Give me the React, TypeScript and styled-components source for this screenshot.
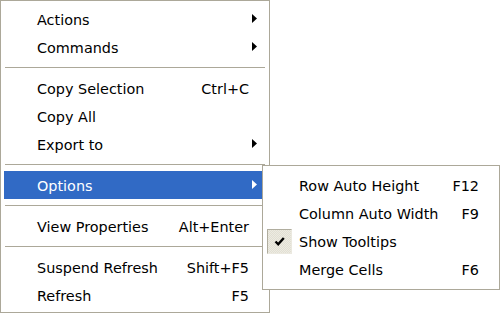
import React from "react";
import styled, { createGlobalStyle } from "styled-components";

const Global = createGlobalStyle`
  html, body { margin: 0; padding: 0; background: #ffffff; }
  body { font-family: "DejaVu Sans", "Liberation Sans", sans-serif; font-size: 14.4px; color: #000; }
`;

const Page = styled.div`
  width: 502px;
  height: 314px;
  overflow: hidden;
`;

const Menu = styled.div`
  box-sizing: border-box;
  width: 270px;
  height: 313px;
  border: 1px solid #aca899;
  background: #ffffff;
  padding: 4px 3px 3px 3px;
  display: flex;
  flex-direction: column;
`;

const SubMenu = styled.div`
  position: absolute;
  left: 258px;
  top: -6px;
  box-sizing: border-box;
  width: 238px;
  border: 1px solid #aca899;
  background: #ffffff;
  padding: 5px 3px 6px 3px;
  display: flex;
  flex-direction: column;
  z-index: 2;
`;

const Item = styled.div<{ $active?: boolean }>`
  position: relative;
  box-sizing: border-box;
  height: 28px;
  display: grid;
  grid-template-columns: 33px 1fr auto 17px;
  align-items: center;
  background: ${(p) => (p.$active ? "#316ac5" : "transparent")};
  color: ${(p) => (p.$active ? "#ffffff" : "#000000")};
  white-space: nowrap;
`;

const Label = styled.span`
  padding-top: 2px;
`;

const Shortcut = styled.span`
  padding-top: 2px;
  text-align: right;
`;

const ArrowCell = styled.span`
  display: flex;
  align-items: center;
  padding-left: 3px;
  margin-top: -2px;
`;

const IconCell = styled.span`
  display: flex;
  align-items: center;
  height: 100%;
`;

const CheckBox = styled.span`
  box-sizing: border-box;
  margin-left: 1px;
  width: 25px;
  height: 25px;
  border-top: 1px solid #b0ad9e;
  border-left: 1px solid #b0ad9e;
  border-right: 1px solid #ebe9e0;
  border-bottom: 1px solid #ebe9e0;
  background-color: #ecebe3;
  background-image:
    linear-gradient(45deg, #e2dfd2 25%, transparent 25%, transparent 75%, #e2dfd2 75%),
    linear-gradient(45deg, #e2dfd2 25%, transparent 25%, transparent 75%, #e2dfd2 75%);
  background-size: 2px 2px;
  background-position: 0 0, 1px 1px;
  display: flex;
  align-items: center;
  justify-content: center;
`;

const Separator = styled.div`
  height: 13px;
  flex: none;
  &::before {
    content: "";
    display: block;
    margin: 6px 1px 0 1px;
    height: 1px;
    background: #aca899;
  }
`;

const Arrow = ({ color }: { color: string }) => (
  <svg width="5" height="9" viewBox="0 0 5 9">
    <polygon points="0,0 5,4.5 0,9" fill={color} />
  </svg>
);

const Check = () => (
  <svg width="11" height="11" viewBox="0 0 11 11">
    <path d="M1.5 5.5 L4.2 8.3 L9.8 2" fill="none" stroke="#000" strokeWidth="2.4" />
  </svg>
);

type Entry = { label: string; shortcut?: string; sub?: boolean; checked?: boolean };

const Row = ({ e, active, children }: { e: Entry; active?: boolean; children?: React.ReactNode }) => (
  <Item $active={active}>
    <IconCell>
      {e.checked && (
        <CheckBox>
          <Check />
        </CheckBox>
      )}
    </IconCell>
    <Label>{e.label}</Label>
    <Shortcut>{e.shortcut ?? ""}</Shortcut>
    <ArrowCell>{e.sub && <Arrow color={active ? "#ffffff" : "#000000"} />}</ArrowCell>
    {children}
  </Item>
);

const options: Entry[] = [
  { label: "Row Auto Height", shortcut: "F12" },
  { label: "Column Auto Width", shortcut: "F9" },
  { label: "Show Tooltips", checked: true },
  { label: "Merge Cells", shortcut: "F6" },
];

export default function App() {
  return (
    <Page>
      <Global />
      <Menu>
        <Row e={{ label: "Actions", sub: true }} />
        <Row e={{ label: "Commands", sub: true }} />
        <Separator />
        <Row e={{ label: "Copy Selection", shortcut: "Ctrl+C" }} />
        <Row e={{ label: "Copy All" }} />
        <Row e={{ label: "Export to", sub: true }} />
        <Separator />
        <Row e={{ label: "Options", sub: true }} active>
          <SubMenu>
            {options.map((o) => (
              <Row key={o.label} e={o} />
            ))}
          </SubMenu>
        </Row>
        <Separator />
        <Row e={{ label: "View Properties", shortcut: "Alt+Enter" }} />
        <Separator />
        <Row e={{ label: "Suspend Refresh", shortcut: "Shift+F5" }} />
        <Row e={{ label: "Refresh", shortcut: "F5" }} />
      </Menu>
    </Page>
  );
}
